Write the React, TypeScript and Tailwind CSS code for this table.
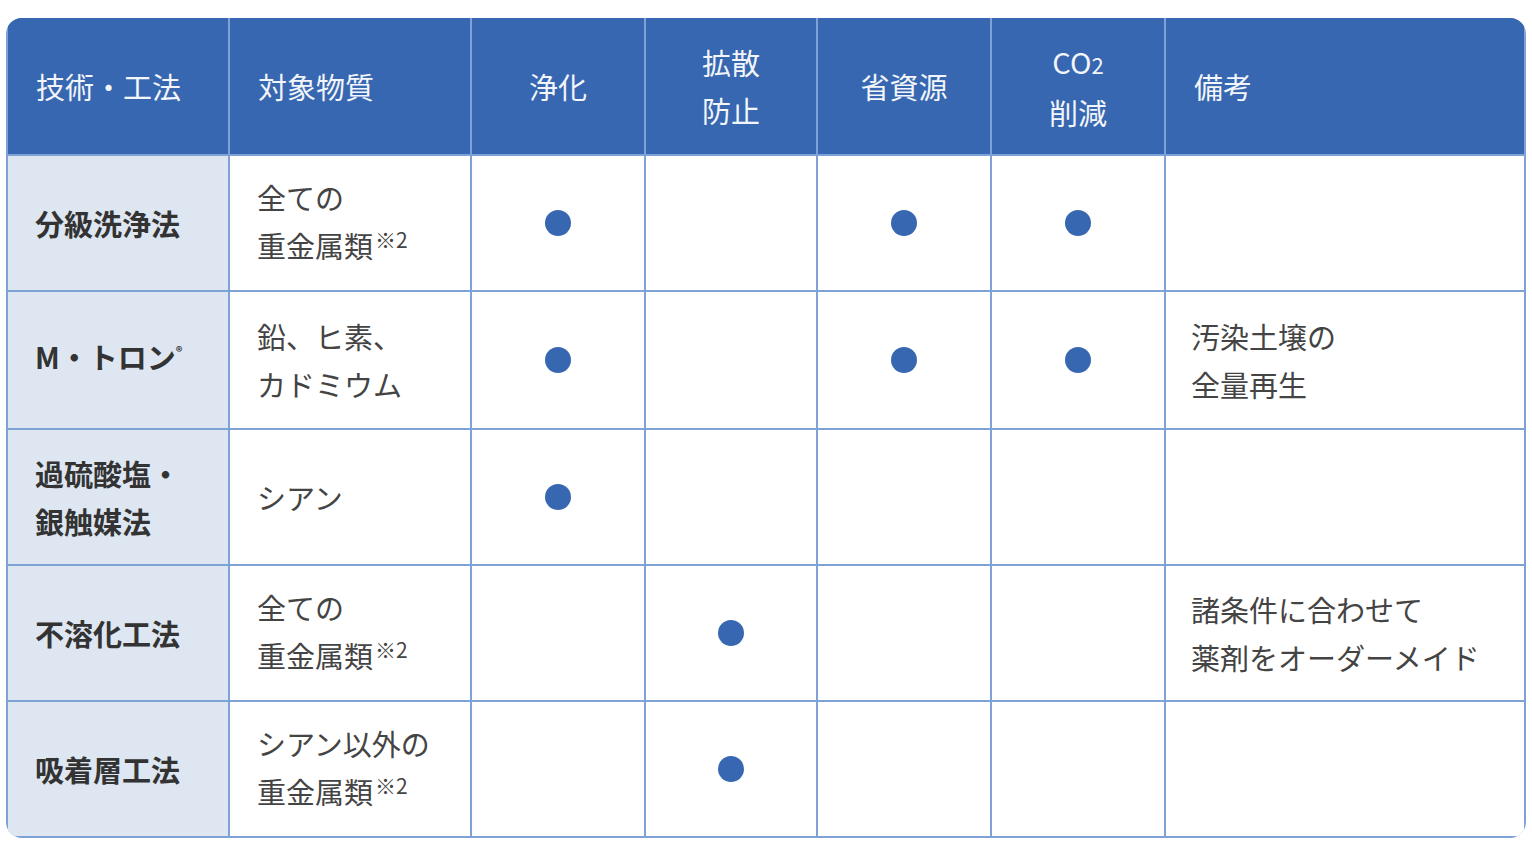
import React from "react";

const cols = "grid-cols-[220px_240px_172px_170px_172px_172px_1fr]";

const Dot = () => <span className="block w-[26px] h-[26px] rounded-full bg-[#3767b0]" />;

const Note = () => (
  <span className="text-[21px] relative -top-[10px] ml-[2px] align-baseline">※2</span>
);

type Row = {
  name: React.ReactNode;
  target: React.ReactNode;
  marks: boolean[];
  note?: React.ReactNode;
  h: string;
};

const rows: Row[] = [
  {
    name: "分級洗浄法",
    target: (
      <>
        全ての
        <br />
        重金属類<Note />
      </>
    ),
    marks: [true, false, true, true],
    h: "h-[134px]",
  },
  {
    name: (
      <>
        M・トロン<span className="text-[13px] relative -top-[12px]">®</span>
      </>
    ),
    target: (
      <>
        鉛、ヒ素、
        <br />
        カドミウム
      </>
    ),
    marks: [true, false, true, true],
    note: (
      <>
        汚染土壌の
        <br />
        全量再生
      </>
    ),
    h: "h-[136px]",
  },
  {
    name: (
      <>
        過硫酸塩・
        <br />
        銀触媒法
      </>
    ),
    target: "シアン",
    marks: [true, false, false, false],
    h: "h-[134px]",
  },
  {
    name: "不溶化工法",
    target: (
      <>
        全ての
        <br />
        重金属類<Note />
      </>
    ),
    marks: [false, true, false, false],
    note: (
      <>
        諸条件に合わせて
        <br />
        薬剤をオーダーメイド
      </>
    ),
    h: "h-[134px]",
  },
  {
    name: "吸着層工法",
    target: (
      <>
        シアン以外の
        <br />
        重金属類<Note />
      </>
    ),
    marks: [false, true, false, false],
    h: "h-[134px]",
  },
];

const headers: { label: React.ReactNode; center?: boolean }[] = [
  { label: "技術・工法" },
  { label: "対象物質" },
  { label: "浄化", center: true },
  {
    label: (
      <>
        拡散
        <br />
        防止
      </>
    ),
    center: true,
  },
  { label: "省資源", center: true },
  {
    label: (
      <>
        CO<span className="text-[22px]">2</span>
        <br />
        削減
      </>
    ),
    center: true,
  },
  { label: "備考" },
];

export default function App() {
  return (
    <div
      className="w-[1532px] h-[846px] bg-white pt-[18px] pl-[6px]"
      style={{ fontFamily: '"Noto Sans CJK JP", "Noto Sans", sans-serif' }}
    >
      <div className="w-[1520px] rounded-[16px] overflow-hidden bg-[#7fa2d6] p-[2px] pt-0">
        <div className={`grid ${cols} gap-[2px] text-[29px] leading-[48px]`}>
          {headers.map((h, i) => (
            <div
              key={i}
              className={`bg-[#3767b0] text-[#f2f5fa] h-[136px] flex items-center ${
                h.center ? "justify-center text-center" : "pl-[28px]"
              }`}
            >
              <div>{h.label}</div>
            </div>
          ))}
          {rows.map((r, ri) => (
            <React.Fragment key={ri}>
              <div className={`bg-[#dde6f1] ${r.h} flex items-center pl-[27px] font-bold text-[#333]`}>
                <div>{r.name}</div>
              </div>
              <div className="bg-white flex items-center pl-[27px] text-[#444]">
                <div>{r.target}</div>
              </div>
              {r.marks.map((m, mi) => (
                <div key={mi} className="bg-white flex items-center justify-center">
                  {m && <Dot />}
                </div>
              ))}
              <div className="bg-white flex items-center pl-[25px] text-[#444]">
                <div>{r.note}</div>
              </div>
            </React.Fragment>
          ))}
        </div>
      </div>
    </div>
  );
}
